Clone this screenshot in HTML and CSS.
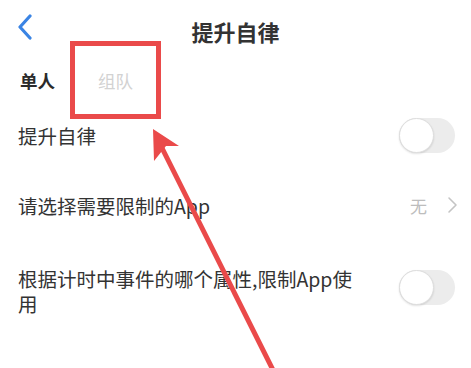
FILE: index.html
```html
<!DOCTYPE html>
<html lang="zh-CN">

<head>
    <meta charset="UTF-8">
    <meta name="viewport" content="width=device-width, initial-scale=1.0">
    <title>提升自律</title>
    <link rel="stylesheet" href="styles.css">
</head>

<body>
    <div class="page">
        <header class="topbar">
            <a class="back" href="#">
                <svg width="18" height="26" viewBox="0 0 18 26">
                    <path d="M14 2 L4 13 L14 24" fill="none" stroke="#3a84e4" stroke-width="3.2" stroke-linecap="round" stroke-linejoin="round" />
                </svg>
            </a>
            <h1>提升自律</h1>
            <span></span>
        </header>

        <nav class="tabs">
            <span class="tab active">单人</span>
            <span class="tab">组队</span>
        </nav>

        <div class="row">
            <span class="label">提升自律</span>
            <span class="switch"><span class="knob"></span></span>
        </div>

        <div class="row">
            <span class="label">请选择需要限制的App</span>
            <span class="value">无
                <svg width="11" height="18" viewBox="0 0 11 18">
                    <path d="M2 2 L9 9 L2 16" fill="none" stroke="#c4c4c4" stroke-width="1.6" stroke-linecap="round" stroke-linejoin="round" />
                </svg>
            </span>
        </div>

        <div class="row tall">
            <span class="label">根据计时中事件的哪个属性,限制App使用</span>
            <span class="switch"><span class="knob"></span></span>
        </div>

        <!-- annotation drawn over the screenshot -->
        <svg class="markup" width="471" height="368" viewBox="0 0 471 368">
            <rect x="72.5" y="43.5" width="86" height="73" fill="none" stroke="#ea4a4a" stroke-width="5" />
            <line x1="160" y1="144" x2="274" y2="372" stroke="#ea4a4a" stroke-width="5" />
            <path d="M153 129 L179 146 L166 146 L154 161 Z" fill="#ea4a4a" />
        </svg>
    </div>
</body>

</html>
```

FILE: styles.css
```css
body {
    margin: 0;
    background: #fff;
    font-family: "Noto Sans CJK SC", "Noto Sans", sans-serif;
    color: #2b2b2b;
}

.page {
    position: relative;
    width: 471px;
    height: 368px;
    overflow: hidden;
}

.topbar {
    display: grid;
    grid-template-columns: 1fr auto 1fr;
    align-items: center;
    height: 60px;
}

.back {
    display: flex;
    align-items: center;
    margin: -6px 0 0 16px;
}

h1 {
    margin: 2px 0 0;
    font-size: 22px;
    font-weight: 700;
    color: #333;
}

.tabs {
    display: flex;
    gap: 43px;
    padding-left: 20px;
    height: 40px;
    align-items: center;
}

.tab {
    font-size: 17.5px;
    color: #d2d2d2;
}

.tab.active {
    font-weight: 700;
    color: #2b2b2b;
}

.row {
    display: flex;
    align-items: center;
    justify-content: space-between;
    height: 70px;
    padding: 0 16px 0 18px;
}

.row.tall {
    height: auto;
    padding-top: 26px;
    padding-bottom: 22px;
    align-items: flex-start;
}

.row.tall .label {
    width: 350px;
}

.row.tall .switch {
    margin-top: 4px;
}

.label {
    font-size: 19.5px;
    line-height: 25px;
    color: #333;
}

.value {
    display: flex;
    align-items: center;
    gap: 20px;
    font-size: 17px;
    color: #bdbdbd;
    margin-right: -3px;
}

.switch {
    display: flex;
    align-items: center;
    width: 56px;
    height: 35px;
    border-radius: 18px;
    background: #ececec;
    flex-shrink: 0;
}

.knob {
    width: 33px;
    height: 33px;
    border-radius: 50%;
    background: #fff;
    border: 1px solid #dedede;
    box-shadow: 0 1px 2px rgba(0, 0, 0, 0.12);
}

.markup {
    position: absolute;
    left: 0;
    top: 0;
    pointer-events: none;
}
```
